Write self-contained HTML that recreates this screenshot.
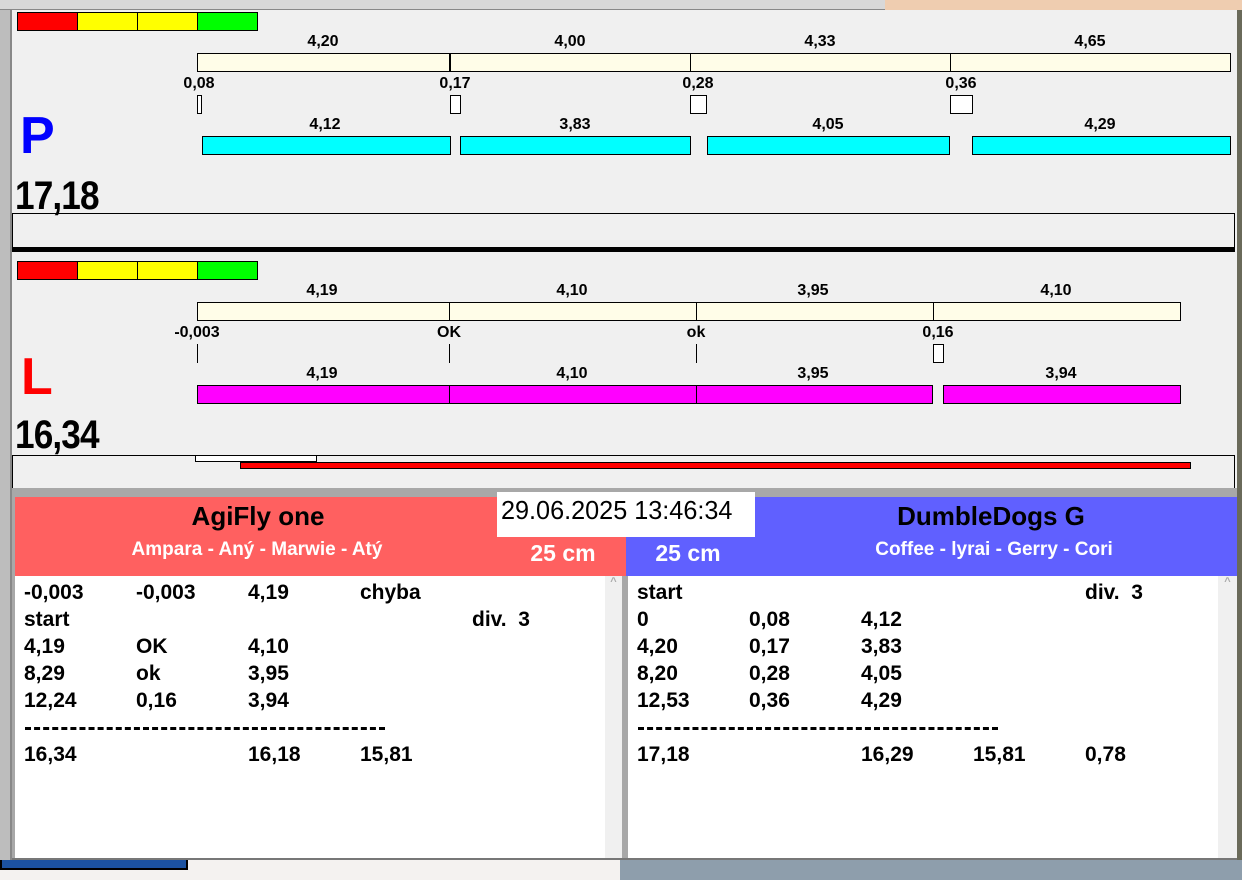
<!DOCTYPE html><html><head><meta charset="utf-8"><style>
*{margin:0;padding:0;box-sizing:border-box}
body{width:1242px;height:880px;overflow:hidden;background:#f4f2f0;position:relative;font-family:"Liberation Sans",Arial,sans-serif;font-weight:bold}
.a{position:absolute}
.bx{position:absolute;border:1px solid #000}
.lb{position:absolute;font-size:16px;transform:translateX(-50%);white-space:nowrap;line-height:18px}
.t{position:absolute;font-size:21px;line-height:27px;white-space:nowrap}
.big{position:absolute;font-size:40px;line-height:44px;letter-spacing:-1px;transform:scaleX(0.88);transform-origin:left top}
</style></head><body>
<div class="a" style="left:620px;top:858px;width:622px;height:22px;background:#8e9eac"></div>
<div class="a" style="left:0;top:818px;width:188px;height:52px;background:#1c52a0;border:2px solid #000"></div>
<div class="a" style="left:0;top:0;width:885px;height:10px;background:#d8d8d8;border-bottom:1px solid #888"></div>
<div class="a" style="left:885px;top:0;width:357px;height:12px;background:#efcdb0"></div>
<div class="a" style="left:1236px;top:10px;width:6px;height:850px;background:#6a6a5a"></div>
<div class="a" style="left:0;top:10px;width:12px;height:850px;background:#bdbdbd;border-right:2px solid #888"></div>
<div class="a" style="left:12px;top:10px;width:1225px;height:480px;background:#f0f0f0"></div>

<!-- P panel -->
<div class="bx" style="left:17px;top:12px;width:61px;height:19px;background:#f00"></div>
<div class="bx" style="left:77px;top:12px;width:61px;height:19px;background:#ff0"></div>
<div class="bx" style="left:137px;top:12px;width:61px;height:19px;background:#ff0"></div>
<div class="bx" style="left:197px;top:12px;width:61px;height:19px;background:#0f0"></div>
<div class="bx" style="left:197px;top:53px;width:1034px;height:19px;background:#fffde8"></div>
<div class="a" style="left:449px;top:53px;width:2px;height:19px;background:#000"></div>
<div class="a" style="left:690px;top:53px;width:1px;height:19px;background:#000"></div>
<div class="a" style="left:950px;top:53px;width:1px;height:19px;background:#000"></div>
<div class="lb" style="left:323px;top:33px">4,20</div>
<div class="lb" style="left:570px;top:33px">4,00</div>
<div class="lb" style="left:820px;top:33px">4,33</div>
<div class="lb" style="left:1090px;top:33px">4,65</div>
<div class="lb" style="left:199px;top:75px">0,08</div>
<div class="lb" style="left:455px;top:75px">0,17</div>
<div class="lb" style="left:698px;top:75px">0,28</div>
<div class="lb" style="left:961px;top:75px">0,36</div>
<div class="bx" style="left:197px;top:95px;width:5px;height:19px;background:#fff"></div>
<div class="bx" style="left:450px;top:95px;width:11px;height:19px;background:#fff"></div>
<div class="bx" style="left:690px;top:95px;width:17px;height:19px;background:#fff"></div>
<div class="bx" style="left:950px;top:95px;width:23px;height:19px;background:#fff"></div>
<div class="lb" style="left:325px;top:116px">4,12</div>
<div class="lb" style="left:575px;top:116px">3,83</div>
<div class="lb" style="left:828px;top:116px">4,05</div>
<div class="lb" style="left:1100px;top:116px">4,29</div>
<div class="bx" style="left:202px;top:136px;width:249px;height:19px;background:#0ff"></div>
<div class="bx" style="left:460px;top:136px;width:231px;height:19px;background:#0ff"></div>
<div class="bx" style="left:707px;top:136px;width:243px;height:19px;background:#0ff"></div>
<div class="bx" style="left:972px;top:136px;width:259px;height:19px;background:#0ff"></div>
<div class="a" style="left:20px;top:106px;font-size:52px;color:#0000ff;line-height:60px">P</div>
<div class="big" style="left:15px;top:174px">17,18</div>
<div class="bx" style="left:12px;top:213px;width:1223px;height:36px;border-bottom:none"></div>
<div class="a" style="left:12px;top:247px;width:1223px;height:5px;background:#000"></div>

<!-- L panel -->
<div class="bx" style="left:17px;top:261px;width:61px;height:19px;background:#f00"></div>
<div class="bx" style="left:77px;top:261px;width:61px;height:19px;background:#ff0"></div>
<div class="bx" style="left:137px;top:261px;width:61px;height:19px;background:#ff0"></div>
<div class="bx" style="left:197px;top:261px;width:61px;height:19px;background:#0f0"></div>
<div class="bx" style="left:197px;top:302px;width:984px;height:19px;background:#fffde8"></div>
<div class="a" style="left:449px;top:302px;width:1px;height:19px;background:#000"></div>
<div class="a" style="left:696px;top:302px;width:1px;height:19px;background:#000"></div>
<div class="a" style="left:933px;top:302px;width:1px;height:19px;background:#000"></div>
<div class="lb" style="left:322px;top:282px">4,19</div>
<div class="lb" style="left:572px;top:282px">4,10</div>
<div class="lb" style="left:813px;top:282px">3,95</div>
<div class="lb" style="left:1056px;top:282px">4,10</div>
<div class="lb" style="left:197px;top:324px">-0,003</div>
<div class="lb" style="left:449px;top:324px">OK</div>
<div class="lb" style="left:696px;top:324px">ok</div>
<div class="lb" style="left:938px;top:324px">0,16</div>
<div class="a" style="left:197px;top:344px;width:1px;height:19px;background:#000"></div>
<div class="a" style="left:449px;top:344px;width:1px;height:19px;background:#000"></div>
<div class="a" style="left:696px;top:344px;width:1px;height:19px;background:#000"></div>
<div class="bx" style="left:933px;top:344px;width:11px;height:19px;background:#fff"></div>
<div class="lb" style="left:322px;top:365px">4,19</div>
<div class="lb" style="left:572px;top:365px">4,10</div>
<div class="lb" style="left:813px;top:365px">3,95</div>
<div class="lb" style="left:1061px;top:365px">3,94</div>
<div class="bx" style="left:197px;top:385px;width:736px;height:19px;background:#f0f"></div>
<div class="a" style="left:449px;top:385px;width:1px;height:19px;background:#000"></div>
<div class="a" style="left:696px;top:385px;width:1px;height:19px;background:#000"></div>
<div class="bx" style="left:943px;top:385px;width:238px;height:19px;background:#f0f"></div>
<div class="a" style="left:21px;top:347px;font-size:52px;color:#f00;line-height:60px">L</div>
<div class="big" style="left:15px;top:413px">16,34</div>
<div class="bx" style="left:12px;top:455px;width:1223px;height:35px;border-bottom:none"></div>
<div class="bx" style="left:195px;top:455px;width:122px;height:7px;background:#fff"></div>
<div class="bx" style="left:240px;top:462px;width:951px;height:7px;background:#f00"></div>

<!-- bottom -->
<div class="a" style="left:12px;top:488px;width:1225px;height:10px;background:#a8a8a8"></div>
<div class="a" style="left:12px;top:498px;width:3px;height:362px;background:#a8a8a8"></div>
<div class="a" style="left:15px;top:497px;width:611px;height:79px;background:#ff6060"></div>
<div class="a" style="left:626px;top:497px;width:611px;height:79px;background:#6060ff"></div>
<div class="a" style="left:497px;top:492px;width:258px;height:45px;background:#fff"></div>
<div class="a" style="left:501px;top:495px;font-size:26px;font-weight:normal;line-height:30px;transform:scaleX(0.97);transform-origin:left top;white-space:nowrap">29.06.2025 13:46:34</div>
<div class="lb" style="left:258px;top:502px;font-size:26px;line-height:28px">AgiFly one</div>
<div class="lb" style="left:257px;top:540px;font-size:19px;color:#fff;line-height:20px">Ampara - Aný - Marwie - Atý</div>
<div class="lb" style="left:563px;top:540px;font-size:23px;color:#fff;line-height:26px">25 cm</div>
<div class="lb" style="left:688px;top:540px;font-size:23px;color:#fff;line-height:26px">25 cm</div>
<div class="lb" style="left:991px;top:502px;font-size:26px;line-height:28px">DumbleDogs G</div>
<div class="lb" style="left:994px;top:540px;font-size:19px;color:#fff;line-height:20px">Coffee - lyrai - Gerry - Cori</div>
<div class="a" style="left:15px;top:576px;width:590px;height:283px;background:#fff"></div>
<div class="a" style="left:605px;top:576px;width:17px;height:283px;background:#f0f0f0;color:#aaa;font-size:11px;text-align:center">^</div>
<div class="a" style="left:622px;top:576px;width:6px;height:283px;background:#a8a8a8"></div>
<div class="a" style="left:628px;top:576px;width:590px;height:283px;background:#fff"></div>
<div class="a" style="left:1218px;top:576px;width:19px;height:283px;background:#f0f0f0;color:#aaa;font-size:11px;text-align:center">^</div>
<div class="a" style="left:12px;top:858px;width:1225px;height:2px;background:#777"></div>

<div class="t" style="left:24px;top:579px">-0,003</div><div class="t" style="left:136px;top:579px">-0,003</div><div class="t" style="left:248px;top:579px">4,19</div><div class="t" style="left:360px;top:579px">chyba</div>
<div class="t" style="left:24px;top:606px">start</div><div class="t" style="left:472px;top:606px">div.&nbsp; 3</div>
<div class="t" style="left:24px;top:633px">4,19</div><div class="t" style="left:136px;top:633px">OK</div><div class="t" style="left:248px;top:633px">4,10</div>
<div class="t" style="left:24px;top:660px">8,29</div><div class="t" style="left:136px;top:660px">ok</div><div class="t" style="left:248px;top:660px">3,95</div>
<div class="t" style="left:24px;top:687px">12,24</div><div class="t" style="left:136px;top:687px">0,16</div><div class="t" style="left:248px;top:687px">3,94</div>
<div class="a" style="left:25px;top:727px;width:360px;height:0;border-top:3px dashed #000"></div>
<div class="t" style="left:24px;top:741px">16,34</div><div class="t" style="left:248px;top:741px">16,18</div><div class="t" style="left:360px;top:741px">15,81</div>

<div class="t" style="left:637px;top:579px">start</div><div class="t" style="left:1085px;top:579px">div.&nbsp; 3</div>
<div class="t" style="left:637px;top:606px">0</div><div class="t" style="left:749px;top:606px">0,08</div><div class="t" style="left:861px;top:606px">4,12</div>
<div class="t" style="left:637px;top:633px">4,20</div><div class="t" style="left:749px;top:633px">0,17</div><div class="t" style="left:861px;top:633px">3,83</div>
<div class="t" style="left:637px;top:660px">8,20</div><div class="t" style="left:749px;top:660px">0,28</div><div class="t" style="left:861px;top:660px">4,05</div>
<div class="t" style="left:637px;top:687px">12,53</div><div class="t" style="left:749px;top:687px">0,36</div><div class="t" style="left:861px;top:687px">4,29</div>
<div class="a" style="left:638px;top:727px;width:360px;height:0;border-top:3px dashed #000"></div>
<div class="t" style="left:637px;top:741px">17,18</div><div class="t" style="left:861px;top:741px">16,29</div><div class="t" style="left:973px;top:741px">15,81</div><div class="t" style="left:1085px;top:741px">0,78</div>
</body></html>
